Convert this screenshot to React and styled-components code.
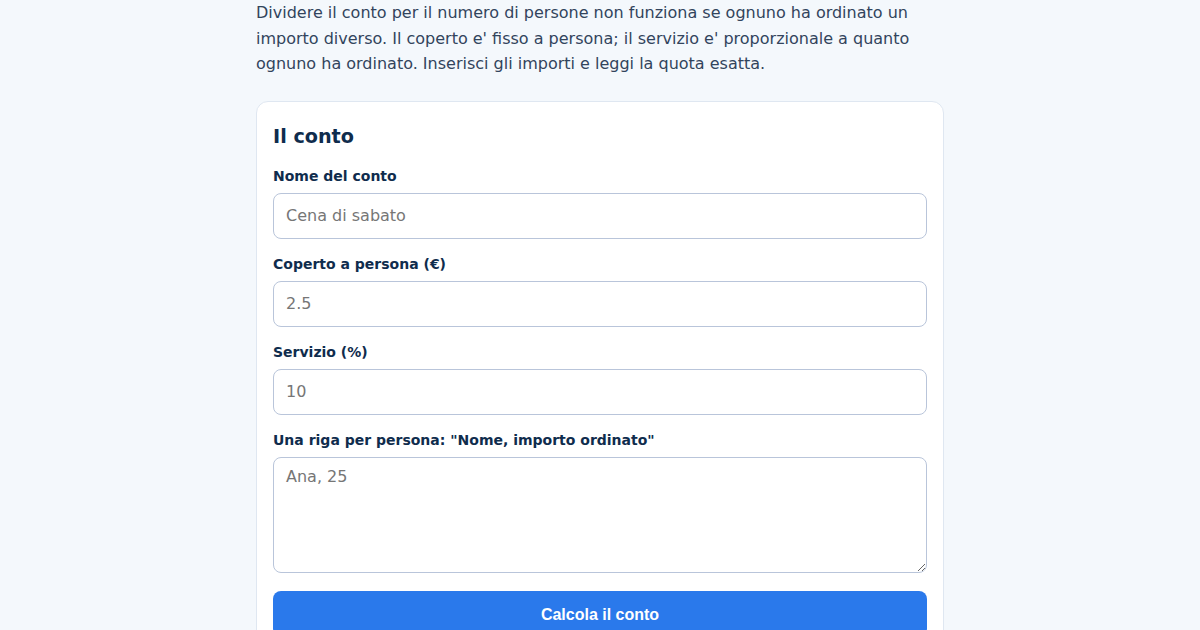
import React from "react";
import styled, { createGlobalStyle } from "styled-components";

const GlobalStyle = createGlobalStyle`
  html, body {
    margin: 0;
    padding: 0;
    background: #f4f8fc;
  }
  body {
    font-family: "DejaVu Sans", Verdana, sans-serif;
    color: #334155;
  }
  * { box-sizing: border-box; }
`;

const Page = styled.main`
  width: 688px;
  margin: 0 auto;
`;

const Intro = styled.p`
  margin: 0 0 24px;
  font-size: 16px;
  line-height: 1.6;
  color: #32445c;
`;

const Card = styled.section`
  background: #ffffff;
  border: 1px solid #dfe7f1;
  border-radius: 12px;
  padding: 22px 16px 24px;
`;

const Title = styled.h2`
  margin: 0 0 17px;
  font-size: 19.2px;
  line-height: 26px;
  font-weight: 700;
  color: #0f2c4d;
`;

const Field = styled.div`
  display: flex;
  flex-direction: column;
  gap: 8px;
  margin-bottom: ${(p) => (p.$last ? "18px" : "16px")};
`;

const Label = styled.label`
  font-size: 14px;
  line-height: 18px;
  font-weight: 700;
  color: #0f2c4d;
`;

const inputBase = `
  width: 100%;
  border: 1px solid #b9c5da;
  border-radius: 8px;
  padding: 0 12px;
  font-family: "DejaVu Sans", Verdana, sans-serif;
  font-size: 16px;
  color: #1e293b;
  background: #ffffff;
  outline: none;
  &::placeholder { color: #767676; }
`;

const Input = styled.input`
  ${inputBase}
  height: 46px;
`;

const TextArea = styled.textarea`
  ${inputBase}
  display: block;
  height: 116px;
  padding: 9px 12px;
  line-height: 1.2;
  resize: vertical;
`;

const Submit = styled.button`
  display: block;
  width: 100%;
  height: 46px;
  padding: 2px 0 0;
  border: none;
  border-radius: 8px;
  background: #2a79eb;
  color: #ffffff;
  font-family: "Liberation Sans", Arial, sans-serif;
  font-size: 16px;
  font-weight: 700;
  cursor: pointer;
`;

const fields = [
  { id: "nome", label: "Nome del conto", placeholder: "Cena di sabato" },
  { id: "coperto", label: "Coperto a persona (€)", placeholder: "2.5" },
  { id: "servizio", label: "Servizio (%)", placeholder: "10" },
];

export default function App() {
  return (
    <>
      <GlobalStyle />
      <Page>
        <Intro>
          Dividere il conto per il numero di persone non funziona se ognuno ha
          ordinato un importo diverso. Il coperto e' fisso a persona; il
          servizio e' proporzionale a quanto ognuno ha ordinato. Inserisci gli
          importi e leggi la quota esatta.
        </Intro>
        <Card>
          <Title>Il conto</Title>
          {fields.map((f) => (
            <Field key={f.id}>
              <Label htmlFor={f.id}>{f.label}</Label>
              <Input id={f.id} placeholder={f.placeholder} />
            </Field>
          ))}
          <Field $last>
            <Label htmlFor="righe">
              Una riga per persona: "Nome, importo ordinato"
            </Label>
            <TextArea id="righe" placeholder="Ana, 25" />
          </Field>
          <Submit type="button">Calcola il conto</Submit>
        </Card>
      </Page>
    </>
  );
}
